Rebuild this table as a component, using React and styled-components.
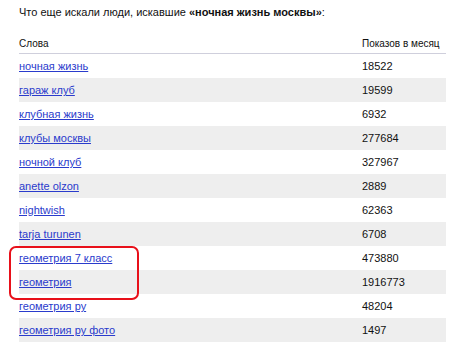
import React from "react";
import styled, { createGlobalStyle } from "styled-components";

const Global = createGlobalStyle`
  html, body { margin: 0; padding: 0; background: #fff; }
  body { font-family: "Liberation Sans", Arial, sans-serif; color: #111; }
`;

const Page = styled.div`
  padding: 4px 15px 0 19px;
  width: 427px;
`;

const Title = styled.p`
  margin: 0;
  font-size: 11px;
  line-height: 16px;
  color: #111;
  white-space: nowrap;
  b { font-weight: bold; }
`;

const TableWrap = styled.div`
  position: relative;
  margin-top: 14px;
`;

const Table = styled.table`
  width: 427px;
  border-collapse: collapse;
  border-spacing: 0;
  table-layout: fixed;
`;

const Th = styled.th`
  text-align: left;
  font-weight: normal;
  font-size: 10px;
  color: #111;
  height: 18px;
  padding: 0 0 1px 0;
  vertical-align: middle;
  white-space: nowrap;
  border-bottom: 1px solid #cfcfdc;
  width: ${(p) => p.$w || "auto"};
`;

const Row = styled.tr`
  background: ${(p) => (p.$alt ? "#eeeeee" : "#ffffff")};
`;

const Td = styled.td`
  height: 24px;
  padding: 0;
  font-size: 11px;
  vertical-align: middle;
  white-space: nowrap;
`;

const Link = styled.a`
  color: #2a3bcc;
  text-decoration: underline;
`;

const Highlight = styled.div`
  position: absolute;
  left: -10px;
  top: 212px;
  width: 126px;
  height: 50px;
  border: 2px solid #e8101a;
  border-radius: 7px;
  pointer-events: none;
`;

const rows = [
  ["ночная жизнь", "18522"],
  ["гараж клуб", "19599"],
  ["клубная жизнь", "6932"],
  ["клубы москвы", "277684"],
  ["ночной клуб", "327967"],
  ["anette olzon", "2889"],
  ["nightwish", "62363"],
  ["tarja turunen", "6708"],
  ["геометрия 7 класс", "473880"],
  ["геометрия", "1916773"],
  ["геометрия ру", "48204"],
  ["геометрия ру фото", "1497"],
];

export default function App() {
  return (
    <>
      <Global />
      <Page>
        <Title>
          Что еще искали люди, искавшие <b>«ночная жизнь москвы»</b>:
        </Title>
        <TableWrap>
          <Table>
            <thead>
              <tr>
                <Th>Слова</Th>
                <Th $w="84px">Показов в месяц</Th>
              </tr>
            </thead>
            <tbody>
              {rows.map(([w, n], i) => (
                <Row key={w} $alt={i % 2 === 1}>
                  <Td>
                    <Link href="#">{w}</Link>
                  </Td>
                  <Td>{n}</Td>
                </Row>
              ))}
            </tbody>
          </Table>
          <Highlight />
        </TableWrap>
      </Page>
    </>
  );
}
